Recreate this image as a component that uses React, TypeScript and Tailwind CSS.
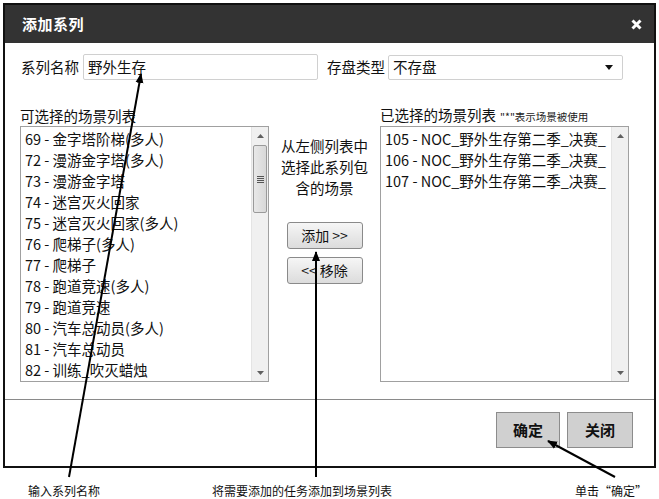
import React from 'react';

const leftItems = [
  '69 - 金字塔阶梯(多人)',
  '72 - 漫游金字塔(多人)',
  '73 - 漫游金字塔',
  '74 - 迷宫灭火回家',
  '75 - 迷宫灭火回家(多人)',
  '76 - 爬梯子(多人)',
  '77 - 爬梯子',
  '78 - 跑道竞速(多人)',
  '79 - 跑道竞速',
  '80 - 汽车总动员(多人)',
  '81 - 汽车总动员',
  '82 - 训练_吹灭蜡烛',
];

const rightItems = [
  '105 - NOC_野外生存第二季_决赛_',
  '106 - NOC_野外生存第二季_决赛_',
  '107 - NOC_野外生存第二季_决赛_',
];

const font = { fontFamily: '"Noto Sans CJK SC", "Liberation Sans", sans-serif' };

const Scrollbar: React.FC<{ thumb?: boolean }> = ({ thumb }) => (
  <div className="w-[17px] h-full flex flex-col bg-[#f0f0f0] border-l border-[#e4e4e4] shrink-0">
    <div className="h-[17px] flex items-center justify-center">
      <svg width="7" height="4" viewBox="0 0 7 4">
        <path d="M0 4 L3.5 0 L7 4 Z" fill="#606060" />
      </svg>
    </div>
    <div className="flex-1">
      {thumb && (
        <div className="mx-[1px] mt-[1px] h-[68px] rounded-[2px] border border-[#9a9a9a] bg-gradient-to-r from-[#e8e8e8] to-[#d8d8d8] flex items-center justify-center">
          <div className="flex flex-col gap-[1px]">
            <div className="w-[7px] h-[1px] bg-[#555]" />
            <div className="w-[7px] h-[1px] bg-[#555]" />
            <div className="w-[7px] h-[1px] bg-[#555]" />
            <div className="w-[7px] h-[1px] bg-[#555]" />
          </div>
        </div>
      )}
    </div>
    <div className="h-[17px] flex items-center justify-center">
      <svg width="7" height="4" viewBox="0 0 7 4">
        <path d="M0 0 L7 0 L3.5 4 Z" fill="#606060" />
      </svg>
    </div>
  </div>
);

const ListBox: React.FC<{ items: string[]; thumb?: boolean }> = ({ items, thumb }) => (
  <div className="w-[249px] h-[256px] border border-[#a0a0a0] flex bg-white">
    <div className="flex-1 overflow-hidden pl-[4px] pt-[1px]">
      {items.map((it) => (
        <div key={it} className="h-[21px] leading-[21px] text-[14.5px] text-[#111] whitespace-nowrap">
          {it}
        </div>
      ))}
    </div>
    <Scrollbar thumb={thumb} />
  </div>
);

export default function App() {
  return (
    <div className="relative w-[659px] h-[499px] bg-white overflow-hidden" style={font}>
      <div className="pt-[3px] pl-[3px]">
        <div className="w-[653px] h-[465px] border-2 border-[#111] flex flex-col">
          {/* Header */}
          <div className="h-[38px] bg-[#333333] flex items-center justify-between pl-[17px] pr-[12px]">
            <span className="text-white text-[15px] font-bold tracking-[0.5px]">添加系列</span>
            <svg width="11" height="11" viewBox="0 0 11 11">
              <path d="M1.5 1.5 L9.5 9.5 M9.5 1.5 L1.5 9.5" stroke="white" strokeWidth="3" />
            </svg>
          </div>

          {/* Name / type row */}
          <div className="flex items-center mt-[11px] pl-[16px] text-[14.5px] text-[#111]">
            <span>系列名称</span>
            <div className="ml-[4px] w-[235px] h-[26px] border border-[#d0d0d0] rounded-[2px] flex items-center pl-[4px]">
              野外生存
            </div>
            <span className="ml-[9px]">存盘类型</span>
            <div className="ml-[3px] w-[235px] h-[25px] border border-[#d0d0d0] rounded-[2px] flex items-center justify-between pl-[4px] pr-[9px]">
              <span>不存盘</span>
              <svg width="8" height="5" viewBox="0 0 8 5">
                <path d="M0 0 L8 0 L4 5 Z" fill="#111" />
              </svg>
            </div>
          </div>

          {/* Lists */}
          <div className="flex mt-[25px] pl-[15px] text-[#111]">
            <div className="flex flex-col">
              <div className="h-[21px] text-[14.5px] leading-[21px]">可选择的场景列表</div>
              <ListBox items={leftItems} thumb />
            </div>
            <div className="w-[111px] flex flex-col items-center pt-[30px]">
              <div className="text-[14.5px] leading-[21px] text-center w-[100px]">
                从左侧列表中
                <br />
                选择此系列包
                <br />
                含的场景
              </div>
              <button className="mt-[24px] w-[76px] h-[27px] rounded-[3px] border border-[#8a8a8a] bg-gradient-to-b from-[#f6f6f6] to-[#dcdcdc] text-[14px] text-[#111]">
                添加 &gt;&gt;
              </button>
              <button className="mt-[8px] w-[76px] h-[27px] rounded-[3px] border border-[#8a8a8a] bg-gradient-to-b from-[#f6f6f6] to-[#dcdcdc] text-[14px] text-[#111]">
                &lt;&lt; 移除
              </button>
            </div>
            <div className="flex flex-col">
              <div className="h-[21px] flex items-end pb-[2px]">
                <span className="text-[14.5px] leading-[19px]">已选择的场景列表</span>
                <span className="ml-[4px] text-[10.5px] leading-[15px] text-[#222]">"*"表示场景被使用</span>
              </div>
              <ListBox items={rightItems} />
            </div>
          </div>

          {/* Separator */}
          <div className="mt-[17px] h-[1px] bg-[#8a8a8a]" />

          {/* Footer buttons */}
          <div className="flex justify-end gap-[7px] mt-[12px] pr-[21px]">
            <button className="w-[64px] h-[36px] bg-[#d0d0d0] border border-[#8c8c8c] text-[15px] font-bold text-[#111]">
              确定
            </button>
            <button className="w-[66px] h-[36px] bg-[#d0d0d0] border border-[#8c8c8c] text-[15px] font-bold text-[#111]">
              关闭
            </button>
          </div>
        </div>
      </div>

      {/* Annotations */}
      <div className="flex mt-[16px] text-[12px] leading-[14px] text-[#111]">
        <span className="ml-[28px]">输入系列名称</span>
        <span className="ml-[112px]">将需要添加的任务添加到场景列表</span>
        <span className="ml-[183px]">单击“确定”</span>
      </div>

      {/* Arrows */}
      <svg className="absolute left-0 top-0 pointer-events-none" width="659" height="499" viewBox="0 0 659 499">
        <defs>
          <marker id="ah" markerWidth="10" markerHeight="10" refX="9" refY="5" orient="auto" markerUnits="userSpaceOnUse">
            <path d="M0 1 L10 5 L0 9 Z" fill="#000" />
          </marker>
        </defs>
        <line x1="69" y1="477" x2="141" y2="74" stroke="#000" strokeWidth="2" markerEnd="url(#ah)" />
        <line x1="316" y1="477" x2="316" y2="252" stroke="#000" strokeWidth="2" markerEnd="url(#ah)" />
        <line x1="615" y1="477" x2="548" y2="441" stroke="#000" strokeWidth="2" markerEnd="url(#ah)" />
      </svg>
    </div>
  );
}
